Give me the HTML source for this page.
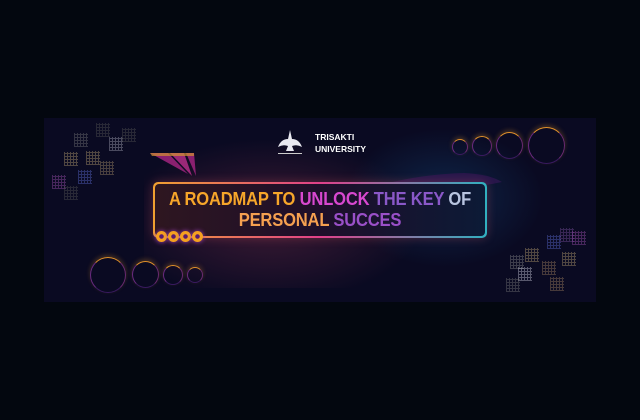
<!DOCTYPE html><html><head><style>
body{margin:0;width:640px;height:420px;background:#03070f;overflow:hidden;position:relative;font-family:"Liberation Sans",sans-serif}
.b{position:absolute;left:44px;top:118px;width:552px;height:184px;background:#0a0a22;overflow:hidden}
.glow1{position:absolute;left:100px;top:20px;width:280px;height:150px;background:radial-gradient(ellipse at 45% 55%,rgba(170,60,90,.32),rgba(10,10,34,0) 70%)}
.glow2{position:absolute;left:300px;top:10px;width:200px;height:140px;background:radial-gradient(ellipse at 50% 50%,rgba(20,70,120,.45),rgba(10,10,34,0) 70%)}
.sq{position:absolute;width:14px;height:14px;background:repeating-linear-gradient(90deg,var(--c) 0 1px,transparent 1px 3px),repeating-linear-gradient(0deg,var(--c) 0 1px,transparent 1px 3px);opacity:.4}
.c{position:absolute;border-radius:50%;border:1px solid transparent;border-top-color:#e0902a;border-left-color:#6a2a80;border-right-color:#6a2a70;border-bottom-color:#3a1a60;box-shadow:0 -2px 5px rgba(245,160,40,.25)}
.box{position:absolute;left:109px;top:64px;width:334px;height:56px;border-radius:5px;padding:2px;box-sizing:border-box;background:linear-gradient(90deg,#f0a030,#e0408a 50%,#30b0c0);box-shadow:0 0 10px rgba(230,90,100,.3)}
.in{width:100%;height:100%;border-radius:4px;background:linear-gradient(90deg,#2e1620,#1e0f2a 50%,#0c1a36)}
.t{position:absolute;left:109px;top:71px;width:334px;text-align:center;font-weight:bold;font-size:18px;line-height:21px;letter-spacing:-0.2px;transform:scaleX(.92)}
.dot{position:absolute;top:113px;width:11px;height:11px;border-radius:50%;background:radial-gradient(circle,#5a1a70 2px,#f5a020 2.5px);box-shadow:0 0 5px #a040c0}
</style></head><body><div class="b">
<div class="glow1"></div><div class="glow2"></div>
<svg style="position:absolute;left:104px;top:34px" width="60" height="26"><polygon points="2,1 20,1 40,22" fill="#8a2070"/><polygon points="22,1 36,1 44,24" fill="#9a2878"/><polygon points="38,1 46,1 48,24" fill="#8a2070"/><polygon points="2,1 46,1 46,4 4,4" fill="#d09030" opacity=".7"/></svg>
<svg style="position:absolute;left:340px;top:52px" width="120" height="20"><path d="M0,14 Q40,4 80,3 Q105,4 118,12 Q100,16 80,17 Q40,18 0,14Z" fill="#2e1650" opacity=".8"/></svg>
<div class="box"><div class="in"></div></div>
<div class="t"><span style="color:#f7a62a">A ROADMAP TO </span><span style="color:#d848d0">UNLOCK </span><span style="color:#8a58c8">THE KEY </span><span style="color:#b8c4e0">OF</span><br><span style="color:#f5a050">PERSONAL </span><span style="color:#9a50c8">SUCCES</span></div>
<div class="dot" style="left:112px"></div><div class="dot" style="left:124px"></div><div class="dot" style="left:136px"></div><div class="dot" style="left:148px"></div>
<svg style="position:absolute;left:231px;top:11px" width="30" height="28"><path d="M15,1 L13,10 Q6,10 3,18 Q8,15 13,17 L11,22 L19,22 L17,17 Q22,15 27,18 Q24,10 17,10Z" fill="#e8e8f0"/><rect x="3" y="24" width="24" height="1" fill="#ccc"/></svg>
<div style="position:absolute;left:271px;top:13px;color:#fff;font-weight:bold;font-size:8.5px;line-height:12px">TRISAKTI<br>UNIVERSITY</div>
<div class="c" style="left:46px;top:139px;width:34px;height:34px"></div>
<div class="c" style="left:88px;top:143px;width:25px;height:25px"></div>
<div class="c" style="left:119px;top:147px;width:18px;height:18px"></div>
<div class="c" style="left:143px;top:149px;width:14px;height:14px"></div>
<div class="c" style="left:408px;top:21px;width:14px;height:14px"></div>
<div class="c" style="left:428px;top:18px;width:18px;height:18px"></div>
<div class="c" style="left:452px;top:14px;width:25px;height:25px"></div>
<div class="c" style="left:484px;top:9px;width:35px;height:35px"></div>
<div class="sq" style="--c:#777;left:30px;top:15px"></div>
<div class="sq" style="--c:#555;left:52px;top:5px"></div>
<div class="sq" style="--c:#aab;left:65px;top:19px"></div>
<div class="sq" style="--c:#555;left:78px;top:10px"></div>
<div class="sq" style="--c:#b9a070;left:20px;top:34px"></div>
<div class="sq" style="--c:#b9a070;left:42px;top:33px"></div>
<div class="sq" style="--c:#a8906a;left:56px;top:43px"></div>
<div class="sq" style="--c:#5a6ad0;left:34px;top:52px"></div>
<div class="sq" style="--c:#a050b0;left:8px;top:57px"></div>
<div class="sq" style="--c:#555;left:20px;top:68px"></div>
<div class="sq" style="--c:#7a50a0;left:516px;top:110px"></div>
<div class="sq" style="--c:#a050b0;left:528px;top:113px"></div>
<div class="sq" style="--c:#5a6ad0;left:503px;top:117px"></div>
<div class="sq" style="--c:#b9a070;left:481px;top:130px"></div>
<div class="sq" style="--c:#b9a070;left:518px;top:134px"></div>
<div class="sq" style="--c:#888;left:466px;top:137px"></div>
<div class="sq" style="--c:#ccd;left:474px;top:149px"></div>
<div class="sq" style="--c:#a08060;left:498px;top:143px"></div>
<div class="sq" style="--c:#777;left:462px;top:160px"></div>
<div class="sq" style="--c:#a08060;left:506px;top:159px"></div>
</div></body></html>
